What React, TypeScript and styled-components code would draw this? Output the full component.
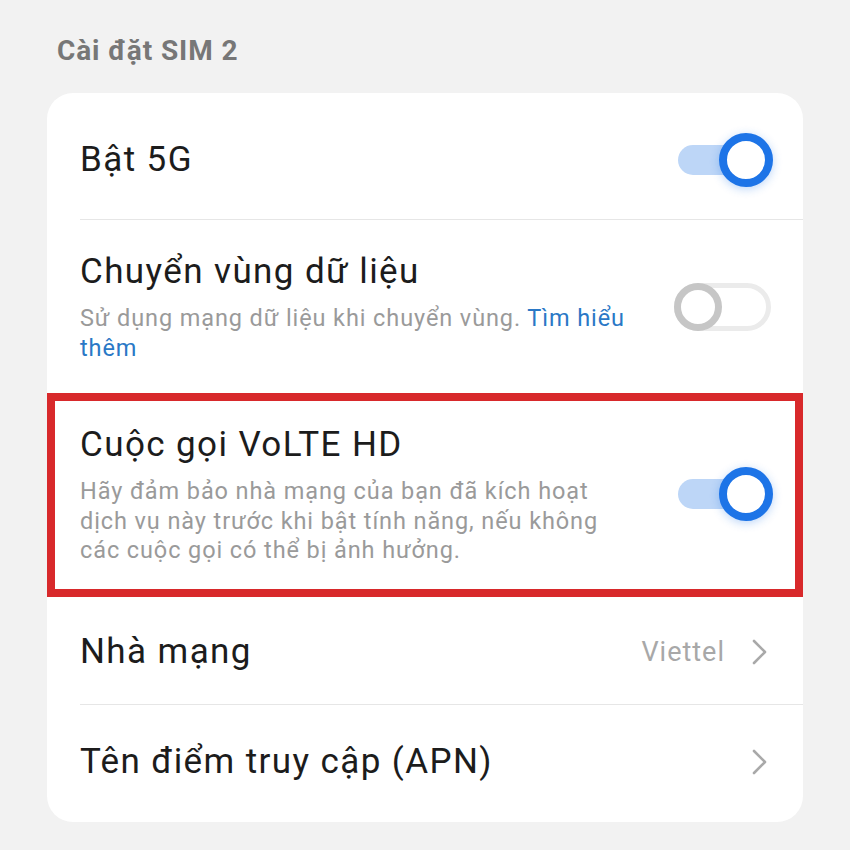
import React from "react";
import styled, { createGlobalStyle } from "styled-components";

const GlobalStyle = createGlobalStyle`
  html, body {
    margin: 0;
    padding: 0;
    background: #f2f2f2;
    font-family: Roboto, "Noto Sans", Arial, sans-serif;
  }
`;

const Page = styled.div`
  width: 850px;
  height: 850px;
  box-sizing: border-box;
  padding: 33px 47px 0 47px;
  background: #f2f2f2;
`;

const SectionTitle = styled.div`
  font-size: 28px;
  line-height: 36px;
  font-weight: 700;
  letter-spacing: 0.9px;
  color: #777777;
  padding-left: 10px;
  margin-bottom: 24px;
`;

const Card = styled.div`
  background: #ffffff;
  border-radius: 26px;
  overflow: hidden;
`;

const Row = styled.div<{ $top: number; $bottom: number; $highlight?: boolean }>`
  display: flex;
  align-items: center;
  justify-content: space-between;
  box-sizing: border-box;
  padding: ${(p) => p.$top}px 32px ${(p) => p.$bottom}px
    ${(p) => (p.$highlight ? 25 : 33)}px;
  border: ${(p) => (p.$highlight ? "8px solid #d8292b" : "none")};
  ${(p) => (p.$highlight ? "padding-right: 24px;" : "")}
`;

const TextCol = styled.div`
  display: flex;
  flex-direction: column;
`;

const Title = styled.div`
  font-size: 35px;
  line-height: 44px;
  letter-spacing: 1.4px;
  color: #1c1c1c;
`;

const Subtitle = styled.div<{ $lh: number; $gap: number }>`
  font-size: 23.5px;
  line-height: ${(p) => p.$lh}px;
  letter-spacing: 0.9px;
  margin-top: ${(p) => p.$gap}px;
  color: #9a9a9a;
`;

const Link = styled.span`
  color: #2a78c6;
`;

const Divider = styled.div`
  height: 1px;
  background: #e6e6e6;
  margin-left: 33px;
`;

const Trailing = styled.div`
  display: flex;
  align-items: center;
  gap: 26px;
`;

const Value = styled.span`
  font-size: 27px;
  letter-spacing: 1px;
  color: #a8a8a8;
`;

const ToggleBox = styled.div`
  position: relative;
  width: 97px;
  height: 54px;
  flex-shrink: 0;
`;

const Track = styled.div<{ $on: boolean }>`
  position: absolute;
  box-sizing: border-box;
  ${(p) =>
    p.$on
      ? `
    left: 4px;
    top: 12px;
    width: 76px;
    height: 30px;
    border-radius: 15px;
    background: #bdd6f7;
  `
      : `
    left: 0;
    top: 3px;
    width: 97px;
    height: 48px;
    border-radius: 24px;
    background: #ffffff;
    border: 5px solid #ebebeb;
  `}
`;

const Knob = styled.div<{ $on: boolean }>`
  position: absolute;
  box-sizing: border-box;
  border-radius: 50%;
  background: #ffffff;
  ${(p) =>
    p.$on
      ? `
    right: -2px;
    top: 0;
    width: 54px;
    height: 54px;
    border: 8px solid #1d74e7;
    box-shadow: 0 2px 10px rgba(29, 116, 231, 0.3);
  `
      : `
    left: 0;
    top: 3px;
    width: 48px;
    height: 48px;
    border: 7px solid #c6c6c6;
  `}
`;

const Toggle = ({ on }: { on: boolean }) => (
  <ToggleBox>
    <Track $on={on} />
    <Knob $on={on} />
  </ToggleBox>
);

const ChevronIcon = styled.svg`
  width: 16px;
  height: 28px;
  margin-right: 4px;
`;

const Chevron = () => (
  <ChevronIcon viewBox="0 0 16 28">
    <polyline
      points="3,3 14,14 3,25"
      fill="none"
      stroke="#a9a9a9"
      strokeWidth="2.6"
      strokeLinecap="round"
      strokeLinejoin="round"
    />
  </ChevronIcon>
);

export default function App() {
  return (
    <>
      <GlobalStyle />
      <Page>
        <SectionTitle>Cài đặt SIM 2</SectionTitle>
        <Card>
          <Row $top={40} $bottom={32}>
            <Title>Bật 5G</Title>
            <Toggle on />
          </Row>
          <Divider />
          <Row $top={30} $bottom={30}>
            <TextCol>
              <Title>Chuyển vùng dữ liệu</Title>
              <Subtitle $lh={30} $gap={9}>
                Sử dụng mạng dữ liệu khi chuyển vùng. <Link>Tìm hiểu</Link>
                <br />
                <Link>thêm</Link>
              </Subtitle>
            </TextCol>
            <Toggle on={false} />
          </Row>
          <Row $top={22} $bottom={23} $highlight>
            <TextCol>
              <Title>Cuộc gọi VoLTE HD</Title>
              <Subtitle $lh={29.5} $gap={10}>
                Hãy đảm bảo nhà mạng của bạn đã kích hoạt
                <br />
                dịch vụ này trước khi bật tính năng, nếu không
                <br />
                các cuộc gọi có thể bị ảnh hưởng.
              </Subtitle>
            </TextCol>
            <Toggle on />
          </Row>
          <Row $top={33} $bottom={30}>
            <Title>Nhà mạng</Title>
            <Trailing>
              <Value>Viettel</Value>
              <Chevron />
            </Trailing>
          </Row>
          <Divider />
          <Row $top={35} $bottom={38}>
            <Title>Tên điểm truy cập (APN)</Title>
            <Trailing>
              <Chevron />
            </Trailing>
          </Row>
        </Card>
      </Page>
    </>
  );
}
